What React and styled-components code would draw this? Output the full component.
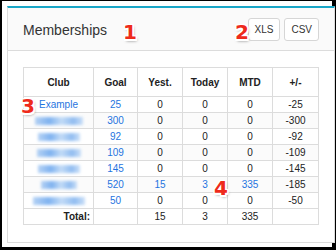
import React from "react";
import styled, { createGlobalStyle } from "styled-components";

const Global = createGlobalStyle`
  html, body { margin: 0; padding: 0; background: #fff; }
  body { font-family: "Liberation Sans", Arial, sans-serif; }
`;

const Frame = styled.div`
  position: relative;
  width: 336px;
  height: 250px;
  box-sizing: border-box;
  border-style: solid;
  border-color: #000;
  border-width: 1px 4px 3px 2px;
  background: #fff;
  padding: 5px 4px 4px 5px;
  display: flex;
`;

const Panel = styled.section`
  flex: 1;
  display: flex;
  flex-direction: column;
  border: 1px solid #dcdcdc;
  border-top: 2px solid #19a7c8;
  background: #fff;
`;

const Header = styled.header`
  height: 43px;
  box-sizing: border-box;
  display: flex;
  align-items: center;
  justify-content: space-between;
  padding: 0 15px 0 15px;
  border-bottom: 1px solid #dcdcdc;
  background: #fafafa;
`;

const Title = styled.h2`
  margin: 0;
  font-size: 14px;
  font-weight: normal;
  color: #333;
  padding-top: 1px;
`;

const Buttons = styled.div`
  display: flex;
  gap: 4px;
`;

const Btn = styled.button`
  height: 23px;
  padding: 0 6px;
  min-width: ${(p) => p.$w}px;
  box-sizing: border-box;
  font-family: "Liberation Sans", Arial, sans-serif;
  font-size: 10px;
  color: #333;
  background: #fff;
  border: 1px solid #d6d6d6;
  border-radius: 3px;
`;

const Body = styled.div`
  padding: 16px 15px;
`;

const Table = styled.table`
  border-collapse: collapse;
  width: 289px;
  table-layout: fixed;
  font-size: 10px;
  color: #222;
`;

const Th = styled.th`
  height: 28px;
  border: 1px solid #dcdcdc;
  font-weight: bold;
  color: #222;
  padding: 0;
  width: ${(p) => p.$w}px;
`;

const Tr = styled.tr`
  background: ${(p) => (p.$odd ? "#fbfbfb" : "#fff")};
`;

const Td = styled.td`
  height: 15px;
  border: 1px solid #dcdcdc;
  padding: 0 3px;
  text-align: ${(p) => p.$align || "center"};
  color: ${(p) => (p.$link ? "#1f74e0" : "#222")};
  font-weight: ${(p) => (p.$bold ? "bold" : "normal")};
  line-height: 15px;
  white-space: nowrap;
  overflow: hidden;
`;

const Blur = styled.span`
  display: inline-block;
  filter: blur(1.4px);
  width: ${(p) => p.$w}px;
  background: linear-gradient(90deg, #a9cbf3, #6aa6ee 30%, #b9d6f6 55%, #7fb2ef 80%, #c3dbf7);
  height: 8px;
  vertical-align: middle;
  opacity: 0.85;
`;

const Marker = styled.span`
  position: absolute;
  left: ${(p) => p.$x}px;
  top: ${(p) => p.$y}px;
  font-family: "DejaVu Sans", "Liberation Sans", sans-serif;
  font-weight: bold;
  font-size: 20px;
  line-height: 1;
  color: #ee2a1b;
  text-shadow:
    -1.5px -1.5px 0 #fff, 1.5px -1.5px 0 #fff, -1.5px 1.5px 0 #fff, 1.5px 1.5px 0 #fff,
    0 -1.5px 0 #fff, 0 1.5px 0 #fff, -1.5px 0 0 #fff, 1.5px 0 0 #fff,
    1px 2px 3px rgba(0, 0, 0, 0.5);
`;

const rows = [
  { club: "Example", goal: 25, y: 0, t: 0, m: 0, d: -25 },
  { blur: 48, goal: 300, y: 0, t: 0, m: 0, d: -300 },
  { blur: 42, goal: 92, y: 0, t: 0, m: 0, d: -92 },
  { blur: 44, goal: 109, y: 0, t: 0, m: 0, d: -109 },
  { blur: 42, goal: 145, y: 0, t: 0, m: 0, d: -145 },
  { blur: 36, goal: 520, y: 15, t: 3, m: 335, d: -185, link: true },
  { blur: 52, goal: 50, y: 0, t: 0, m: 0, d: -50 },
];

export default function App() {
  return (
    <>
      <Global />
      <Frame>
        <Panel>
          <Header>
            <Title>Memberships</Title>
            <Buttons>
              <Btn $w={29}>XLS</Btn>
              <Btn $w={33}>CSV</Btn>
            </Buttons>
          </Header>
          <Body>
            <Table>
              <thead>
                <tr>
                  <Th $w={69}>Club</Th>
                  <Th $w={43}>Goal</Th>
                  <Th $w={44}>Yest.</Th>
                  <Th $w={44}>Today</Th>
                  <Th $w={44}>MTD</Th>
                  <Th $w={45}>+/-</Th>
                </tr>
              </thead>
              <tbody>
                {rows.map((r, i) => (
                  <Tr key={i} $odd={i % 2 === 1}>
                    <Td $link>{r.club ? r.club : <Blur $w={r.blur} />}</Td>
                    <Td $link>{r.goal}</Td>
                    <Td $link={r.link}>{r.y}</Td>
                    <Td $link={r.link}>{r.t}</Td>
                    <Td $link={r.link}>{r.m}</Td>
                    <Td>{r.d}</Td>
                  </Tr>
                ))}
                <Tr $odd={false}>
                  <Td $align="right" $bold>Total:</Td>
                  <Td></Td>
                  <Td>15</Td>
                  <Td>3</Td>
                  <Td>335</Td>
                  <Td></Td>
                </Tr>
              </tbody>
            </Table>
          </Body>
        </Panel>
        <Marker $x={121} $y={21}>1</Marker>
        <Marker $x={233} $y={21}>2</Marker>
        <Marker $x={19} $y={95}>3</Marker>
        <Marker $x={212} $y={177}>4</Marker>
      </Frame>
    </>
  );
}
